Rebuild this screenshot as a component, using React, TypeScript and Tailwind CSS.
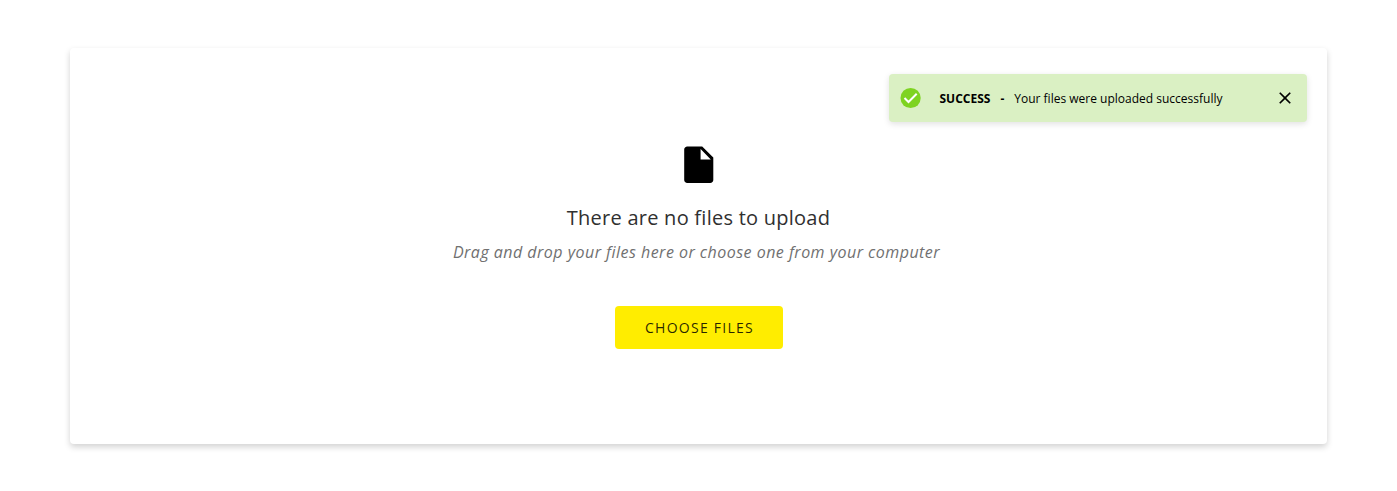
import React from "react";
export default function App() {
  return (
    <div className="h-[491px] w-full bg-white px-[70px] pt-12 font-['Open_Sans',sans-serif]">
      <main className="relative flex h-[395.5px] flex-col items-center rounded-[4px] bg-white pt-[93px] text-black shadow-[0_3px_6px_rgba(0,0,0,0.18)]">
        <svg className="h-12 w-12 shrink-0" viewBox="0 0 24 24" aria-hidden="true">
          <path d="M6.1 2.7h7.5L19.15 8.3v11.2c0 .8-.7 1.5-1.5 1.5H6.1c-.8 0-1.5-.7-1.5-1.5V4.2c0-.8.7-1.5 1.5-1.5zM12.8 4v5.3h5.1z" fill="currentColor" fillRule="evenodd" />
        </svg>
        <h1 className="mt-[14px] text-[20px] leading-[30px] tracking-[0.25px] text-[#303030]">There are no files to upload</h1>
        <p className="mr-1 mt-[7px] text-[16px] leading-6 italic tracking-[0.47px] text-[#707070]">Drag and drop your files here or choose one from your computer</p>
        <button className="mt-[42px] h-[43px] w-[168px] rounded-[4px] bg-[#ffed00] pl-[2px] text-[14px] tracking-[1.25px] text-black/85">CHOOSE FILES</button>
        <aside className="absolute top-[26px] right-5 flex h-12 w-[418.5px] items-center rounded-[4px] bg-[#daf0c3] pr-[12px] pl-[10px] text-[12px] shadow-[0_2px_6px_rgba(0,0,0,0.12)]">
          <svg className="h-6 w-6" viewBox="0 0 24 24" aria-hidden="true"><circle cx="11.6" cy="12" r="10.1" fill="#7ed321" /><path d="M5.5 12l4 4 8.2-8.2" fill="none" stroke="white" strokeWidth="2" /></svg>
          <strong className="ml-[17px] pt-[2px]">SUCCESS</strong><strong className="mx-[10px] pt-[2px]">-</strong><span className="pt-[2px]">Your files were uploaded successfully</span>
          <button className="ml-auto" aria-label="Close"><svg className="h-5 w-5" viewBox="0 0 24 24" fill="currentColor"><path d="M19 6.41L17.59 5 12 10.59 6.41 5 5 6.41 10.59 12 5 17.59 6.41 19 12 13.41 17.59 19 19 17.59 13.41 12z" /></svg></button>
        </aside>
      </main>
    </div>
  );
}
